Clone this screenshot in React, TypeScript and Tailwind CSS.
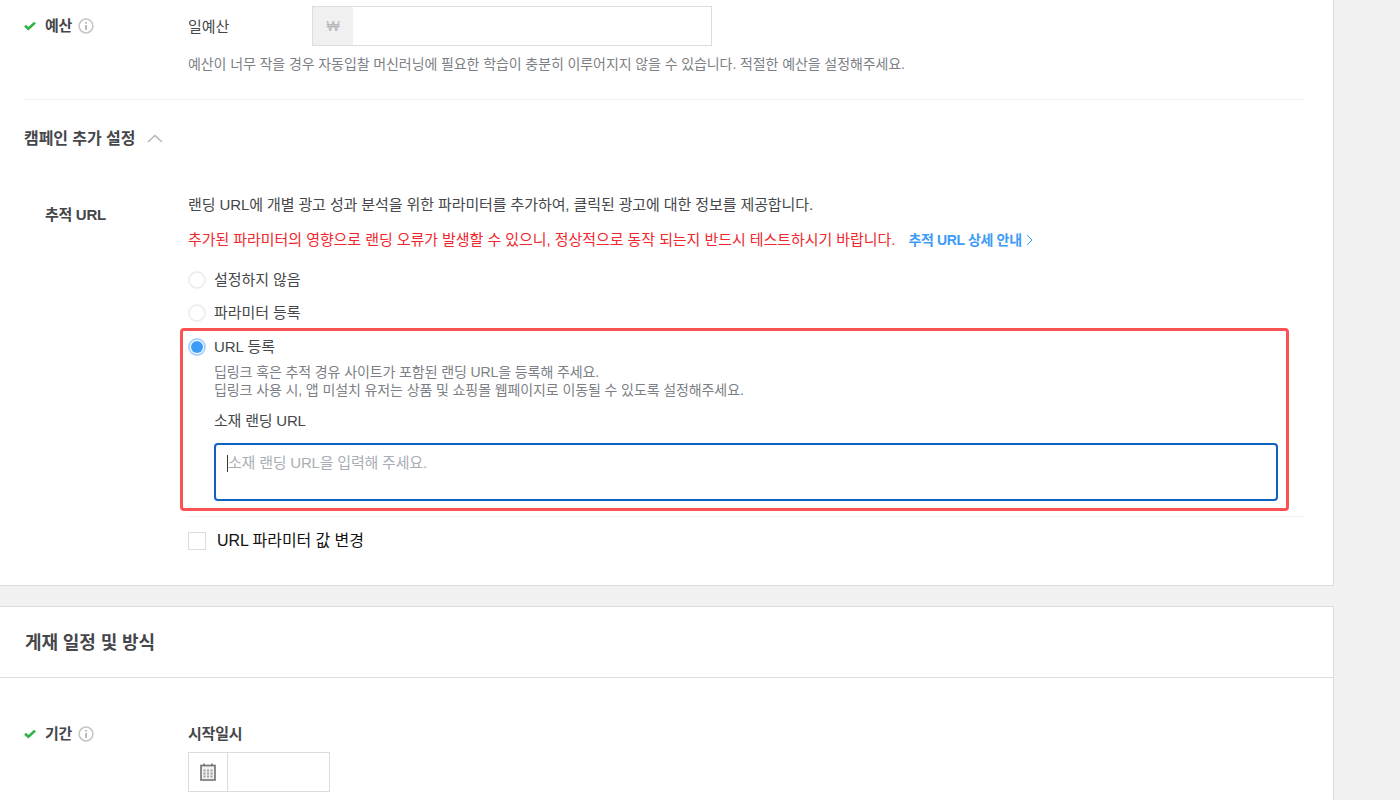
import React from 'react';

const CheckMark = () => (
  <svg width="12" height="10" viewBox="0 0 12 10" className="shrink-0">
    <path d="M1 4.8 L4.4 7.8 L11 1.6" fill="none" stroke="#2fb344" strokeWidth="2.6" />
  </svg>
);

const InfoIcon = () => (
  <svg width="16" height="16" viewBox="0 0 16 16" className="shrink-0">
    <circle cx="8" cy="8" r="6.9" fill="none" stroke="#c4c6c9" strokeWidth="1.5" />
    <rect x="7.2" y="7" width="1.6" height="5" fill="#a9abae" />
    <rect x="7.2" y="4" width="1.6" height="1.6" fill="#a9abae" />
  </svg>
);

const CalendarIcon = () => (
  <svg width="16" height="18" viewBox="0 0 16 18">
    <path d="M4 0.5v3M12 0.5v3" stroke="#6f7174" strokeWidth="1.5" />
    <rect x="1" y="2.5" width="14" height="14.5" fill="#f0f0f0" stroke="#6f7174" strokeWidth="1.6" />
    <path d="M3.5 6.5h2v2h-2zM7 6.5h2v2H7zM10.5 6.5h2v2h-2zM3.5 9.5h2v2h-2zM7 9.5h2v2H7zM10.5 9.5h2v2h-2zM3.5 12.5h2v2h-2zM7 12.5h2v2H7zM10.5 12.5h2v2h-2z" fill="#a0a1a3" />
  </svg>
);

const Radio = ({ label, checked }: { label: string; checked?: boolean }) => (
  <div className="flex items-center h-5">
    {checked ? (
      <span className="w-[18px] h-[18px] rounded-full border-2 border-[#a9d3fb] bg-white flex items-center justify-center">
        <span className="w-3 h-3 rounded-full bg-[#3d9bf8]" />
      </span>
    ) : (
      <span className="w-[18px] h-[18px] rounded-full border-2 border-[#eeeff1] bg-white" />
    )}
    <span className="ml-2 text-[15px] tracking-[-0.05px] text-[#45474b]">{label}</span>
  </div>
);

export default function App() {
  return (
    <div
      className="h-[800px] flex flex-col overflow-hidden bg-[#f1f1f1]"
      style={{ fontFamily: '"Liberation Sans", "Noto Sans CJK KR", sans-serif' }}
    >
      <section className="w-[1334px] h-[586px] shrink-0 bg-white border-r border-b border-[#dcdcdc] pl-6 pr-[29px]">
        <div className="flex h-[100px] border-b border-[#f1f1f2]">
          <div className="w-[164px] pt-[17px] flex items-start">
            <div className="flex items-center h-[18px]">
              <CheckMark />
              <span className="ml-[9px] text-[15px] font-bold tracking-[-0.3px] text-[#45474b]">예산</span>
              <span className="ml-[6px]"><InfoIcon /></span>
            </div>
          </div>
          <div className="pt-[6px]">
            <div className="flex items-center">
              <span className="w-[124px] pt-[2px] text-[15px] tracking-[-0.1px] text-[#45474b]">일예산</span>
              <div className="w-[400px] h-10 border border-[#dcdcdc] flex">
                <span className="w-10 bg-[#f0f0f1] flex items-center justify-center text-sm text-[#b5b7ba]">₩</span>
              </div>
            </div>
            <p className="mt-2 text-sm tracking-[-0.09px] text-[#7c7f85]">
              예산이 너무 작을 경우 자동입찰 머신러닝에 필요한 학습이 충분히 이루어지지 않을 수 있습니다. 적절한 예산을 설정해주세요.
            </p>
          </div>
        </div>

        <div className="flex items-center h-[76px]">
          <h3 className="pt-[1px] text-base font-bold tracking-[-0.07px] text-[#45474b]">캠페인 추가 설정</h3>
          <svg width="16" height="9" viewBox="0 0 16 9" className="ml-[12px] mt-[1px]">
            <path d="M1 8 L8 1.5 L15 8" fill="none" stroke="#b5b7ba" strokeWidth="1.6" />
          </svg>
        </div>

        <div className="flex pl-[21px] pt-[18px]">
          <div className="w-[143px] pt-[10px] text-[15px] font-bold tracking-[-0.3px] text-[#45474b]">추적 URL</div>
          <div className="flex-1">
            <p className="text-[15px] leading-[22px] tracking-[-0.1px] text-[#45474b]">
              랜딩 URL에 개별 광고 성과 분석을 위한 파라미터를 추가하여, 클릭된 광고에 대한 정보를 제공합니다.
            </p>
            <p className="mt-[13px] flex items-center text-[15px] leading-[22px] tracking-[-0.06px] text-[#f0282e]">
              추가된 파라미터의 영향으로 랜딩 오류가 발생할 수 있으니, 정상적으로 동작 되는지 반드시 테스트하시기 바랍니다.
              <a className="ml-[13px] flex items-center text-sm font-bold tracking-[-0.35px] text-[#3d9bf8]">
                추적 URL 상세 안내
                <svg width="7" height="12" viewBox="0 0 7 12" className="ml-[4px]">
                  <path d="M1 1 L6 6 L1 11" fill="none" stroke="#3d9bf8" strokeWidth="1" />
                </svg>
              </a>
            </p>

            <div className="mt-[19px]"><Radio label="설정하지 않음" /></div>
            <div className="mt-[13px]"><Radio label="파라미터 등록" /></div>

            <div className="mt-[5px] -ml-2 w-[1109px] h-[183px] border-[3px] border-[#fb5254] rounded-[4px] pl-[5px] pr-[8px] pt-[6px]">
              <Radio label="URL 등록" checked />
              <div className="ml-[26px] mt-[6px]">
                <p className="text-sm leading-[18px] tracking-[-0.1px] text-[#7c7f85]">
                  딥링크 혹은 추적 경유 사이트가 포함된 랜딩 URL을 등록해 주세요.
                  <br />
                  딥링크 사용 시, 앱 미설치 유저는 상품 및 쇼핑몰 웹페이지로 이동될 수 있도록 설정해주세요.
                </p>
                <p className="mt-[12px] text-[15px] leading-5 tracking-[-0.2px] text-[#45474b]">소재 랜딩 URL</p>
                <div className="mt-[12px] h-[58px] border-2 border-[#0f62c4] rounded-[4px] pl-[11px] pt-[8px] flex items-start">
                  <span className="mt-[2px] w-px h-[17px] bg-[#333]" />
                  <span className="text-[15px] leading-5 tracking-[-0.2px] text-[#a9aeb5]">소재 랜딩 URL을 입력해 주세요.</span>
                </div>
              </div>
            </div>
          </div>
        </div>

        <div className="mt-[5px] ml-[164px] border-t border-[#f1f1f2] pt-[12px] flex items-center">
          <span className="w-[18px] h-[18px] border border-[#dcdcdc] bg-white" />
          <span className="ml-[11px] text-base tracking-[-0.07px] text-[#111]">URL 파라미터 값 변경</span>
        </div>
      </section>

      <section className="mt-5 w-[1334px] flex-1 bg-white border-t border-r border-[#dcdcdc]">
        <div className="h-[71px] pl-[25px] flex items-center border-b border-[#dcdce0]">
          <h2 className="text-lg font-bold tracking-[-0.1px] text-[#45474b] pt-[2px]">게재 일정 및 방식</h2>
        </div>
        <div className="flex pl-6 pt-[46px]">
          <div className="w-[164px] flex items-center h-5 self-start">
            <CheckMark />
            <span className="ml-[9px] text-[15px] font-bold tracking-[-0.3px] text-[#45474b]">기간</span>
            <span className="ml-[6px]"><InfoIcon /></span>
          </div>
          <div>
            <p className="text-[15px] leading-5 font-bold tracking-[-0.2px] text-[#45474b]">시작일시</p>
            <div className="mt-[8px] w-[142px] h-10 border border-[#dcdcdc] flex">
              <span className="w-[39px] border-r border-[#dcdcdc] flex items-center justify-center"><CalendarIcon /></span>
            </div>
          </div>
        </div>
      </section>
    </div>
  );
}
